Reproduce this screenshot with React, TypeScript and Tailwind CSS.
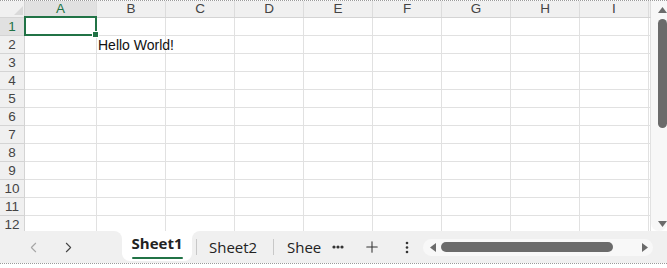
import { ChevronLeft, ChevronRight, Plus } from "lucide-react";

const COLS = ["A", "B", "C", "D", "E", "F", "G", "H", "I"];
const ROWS = [1, 2, 3, 4, 5, 6, 7, 8, 9, 10, 11, 12];

function colWidth(c: string) {
  return c === "A" ? "w-[72px]" : "w-[69px]";
}

function HeaderRow() {
  return (
    <div className="flex h-[17px] shrink-0 border-b border-[#d4d4d4] bg-[#f0f0f0]">
      <div className="relative w-[25px] shrink-0 border-r border-[#d4d4d4]">
        <svg className="absolute left-[14px] top-[5px]" width="9" height="9" viewBox="0 0 9 9">
          <polygon points="9,0 9,9 0,9" fill="#d9d9d9" />
        </svg>
      </div>
      {COLS.map((c) => (
        <div
          key={c}
          className={`${colWidth(c)} shrink-0 flex items-center justify-center border-r border-[#dcdcdc] text-[13.5px] leading-none ${
            c === "A" ? "bg-[#e1e1e1] text-[#217346]" : "text-[#444]"
          }`}
        >
          {c}
        </div>
      ))}
      <div className="w-[2px] shrink-0 border-r border-[#dcdcdc]" />
    </div>
  );
}

function GridRow({ n }: { n: number }) {
  return (
    <div className="flex h-[18px] shrink-0">
      <div
        className={`w-[25px] shrink-0 flex items-center justify-center border-r border-b border-[#d4d4d4] text-[13.5px] leading-none ${
          n === 1 ? "bg-[#e1e1e1] text-[#217346]" : "bg-[#f0f0f0] text-[#444]"
        }`}
      >
        {n}
      </div>
      {COLS.map((c) => (
        <div
          key={c}
          className={`${colWidth(c)} relative shrink-0 flex items-center border-r border-b border-[#e1e1e1] text-[14px] text-[#111] leading-none`}
        >
          {n === 2 && c === "B" && <span className="pl-[1px] whitespace-nowrap">Hello World!</span>}
          {n === 1 && c === "A" && (
            <>
              <div className="absolute left-[-1px] top-[-2px] w-[73px] h-[20px] border-2 border-[#217346] z-10" />
              <div className="absolute left-[68px] top-[14px] w-[5px] h-[5px] bg-[#217346] outline outline-1 outline-white z-20" />
            </>
          )}
        </div>
      ))}
      <div className="w-[2px] shrink-0 border-r border-b border-[#e1e1e1]" />
    </div>
  );
}

function VScroll() {
  return (
    <div className="w-[16px] shrink-0 bg-[#f7f7f7] rounded-b-[8px] flex flex-col items-center">
      <svg className="mt-[6px] ml-[6px]" width="9" height="6" viewBox="0 0 9 6">
        <polygon points="4.5,0 9,6 0,6" fill="#6b6b6b" />
      </svg>
      <div className="mt-[6px] ml-[6px] w-[9px] h-[109px] rounded-full bg-[#6b6b6b]" />
      <div className="flex-1" />
      <svg className="mb-[4px] ml-[6px]" width="9" height="6" viewBox="0 0 9 6">
        <polygon points="0,0 9,0 4.5,6" fill="#6b6b6b" />
      </svg>
    </div>
  );
}

function TabBar() {
  return (
    <div className="flex h-[32px] shrink-0 bg-white" style={{ fontFamily: '"Open Sans", "Noto Sans", sans-serif' }}>
      <div className="w-[122px] shrink-0 bg-[#f0f0f0] rounded-tr-[8px] flex items-center pl-[25px] gap-[18px]">
        <ChevronLeft size={17} strokeWidth={1.5} className="text-[#a6a6a6]" />
        <ChevronRight size={17} strokeWidth={1.5} className="text-[#444]" />
      </div>
      <div className="shrink-0 bg-[#f0f0f0]">
        <div className="w-[70px] h-[30px] bg-white rounded-b-[8px] flex flex-col items-center justify-center">
          <span className="mt-[2px] text-[15px] font-bold leading-none text-[#222]">Sheet1</span>
          <div className="mt-[6px] w-[51px] h-[2px] rounded-full bg-[#217346]" />
        </div>
      </div>
      <div className="flex-1 bg-[#f0f0f0] rounded-tl-[8px] flex items-center text-[15px] text-[#222]">
        <div className="ml-[4px] w-px h-[16px] bg-[#c8c8c8]" />
        <span className="ml-[12px] w-[64px] leading-none">Sheet2</span>
        <div className="w-px h-[16px] bg-[#c8c8c8]" />
        <span className="ml-[13px] leading-none whitespace-nowrap">Shee</span>
        <svg className="ml-[11px]" width="12" height="4" viewBox="0 0 12 4">
          <circle cx="2" cy="2" r="1.6" fill="#333" />
          <circle cx="6" cy="2" r="1.6" fill="#333" />
          <circle cx="10" cy="2" r="1.6" fill="#333" />
        </svg>
        <Plus size={18} strokeWidth={1.4} className="ml-[19px] text-[#333]" />
        <svg className="ml-[24px]" width="4" height="13" viewBox="0 0 4 13">
          <circle cx="2" cy="2" r="1.3" fill="#333" />
          <circle cx="2" cy="6.5" r="1.3" fill="#333" />
          <circle cx="2" cy="11" r="1.3" fill="#333" />
        </svg>
        <div className="ml-[14px] w-[230px] h-[17px] rounded-full bg-[#f8f8f8] flex items-center">
          <svg className="ml-[7px]" width="6" height="9" viewBox="0 0 6 9">
            <polygon points="6,0 6,9 0,4.5" fill="#6b6b6b" />
          </svg>
          <div className="ml-[5px] w-[172px] h-[10px] rounded-full bg-[#6b6b6b]" />
          <div className="flex-1" />
          <svg className="mr-[5px]" width="6" height="9" viewBox="0 0 6 9">
            <polygon points="0,0 6,4.5 0,9" fill="#6b6b6b" />
          </svg>
        </div>
      </div>
    </div>
  );
}

export default function App() {
  return (
    <div
      className="w-[667px] h-[268px] overflow-hidden bg-white flex flex-col"
      style={{ fontFamily: '"Liberation Sans", Arial, sans-serif' }}
    >
      <div className="h-px shrink-0 border-t border-dotted border-[#9a9a9a]" />
      <div className="flex h-[230px] shrink-0">
        <div className="w-[651px] shrink-0 flex flex-col overflow-hidden">
          <HeaderRow />
          {ROWS.map((n) => (
            <GridRow key={n} n={n} />
          ))}
        </div>
        <VScroll />
      </div>
      <TabBar />
      <div className="h-px shrink-0 border-t border-dotted border-[#9a9a9a]" />
    </div>
  );
}
